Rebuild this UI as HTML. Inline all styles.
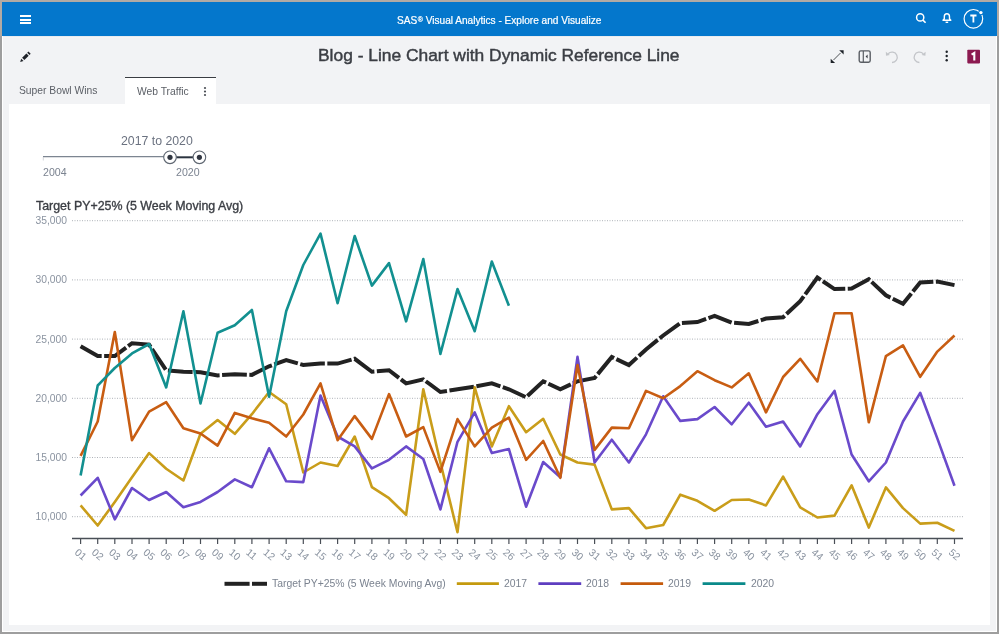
<!DOCTYPE html><html><head><meta charset="utf-8"><style>
*{margin:0;padding:0;box-sizing:border-box}
html,body{width:999px;height:634px;overflow:hidden;background:#9e9e9e;font-family:"Liberation Sans", sans-serif}
.a{position:absolute;white-space:nowrap;line-height:1;will-change:transform}
</style></head><body>
<div class="a" style="left:0;top:0;width:999px;height:2px;background:#b1aaa4"></div>
<div class="a" style="left:0;top:0;width:2px;height:36px;background:#b1aaa4"></div>
<div class="a" style="left:997px;top:0;width:2px;height:36px;background:#b1aaa4"></div>
<div class="a" style="left:2px;top:2px;width:995px;height:630px;background:#fff"></div>
<div class="a" style="left:3px;top:36px;width:993px;height:595px;background:#f2f3f5"></div>
<div class="a" style="left:2px;top:2px;width:995px;height:34px;background:#0477cc"></div>
<div class="a" style="left:3px;top:36px;width:993px;height:1px;background:#e8ebf0"></div>
<div class="a" style="left:3px;top:37px;width:993px;height:1px;background:#f5f5f5"></div>
<div class="a" style="left:9px;top:104px;width:981px;height:521px;background:#fff"></div>
<div class="a" style="left:125px;top:77px;width:91px;height:27px;background:#fff;border-top:1.5px solid #3a3d42"></div>
<!-- header -->
<div class="a" style="left:20px;top:15px;width:11px;height:2px;background:#fff"></div>
<div class="a" style="left:20px;top:18.5px;width:11px;height:2px;background:#fff"></div>
<div class="a" style="left:20px;top:22px;width:11px;height:2px;background:#fff"></div>
<div class="a" style="left:396.8px;top:16.35px;font-size:10.1px;color:#fff;-webkit-text-stroke:0.2px #fff">SAS<span style="font-size:7px;position:relative;top:-2.5px;margin-left:0.5px">®</span> Visual Analytics - Explore and Visualize</div>
<div class="a" style="left:318px;top:47.27px;font-size:17.4px;color:#3b3e44;-webkit-text-stroke:0.45px #3b3e44">Blog - Line Chart with Dynamic Reference Line</div>
<div class="a" style="left:19px;top:85.68px;font-size:10.3px;color:#5b5f66;">Super Bowl Wins</div>
<div class="a" style="left:136.5px;top:86.68px;font-size:10.3px;color:#5b5f66;">Web Traffic</div>
<div class="a" style="left:121px;top:134.59px;font-size:12.3px;color:#6b7280;">2017 to 2020</div>
<div class="a" style="left:43px;top:167.03px;font-size:10.6px;color:#7b8390;">2004</div>
<div class="a" style="left:176px;top:167.03px;font-size:10.6px;color:#7b8390;">2020</div>
<div class="a" style="left:36px;top:200.10px;font-size:12.4px;color:#3b3e44;-webkit-text-stroke:0.35px #3b3e44">Target PY+25% (5 Week Moving Avg)</div>
<div class="a" style="left:272px;top:578.70px;font-size:10.4px;color:#7b8390;">Target PY+25% (5 Week Moving Avg)</div>
<div class="a" style="left:504px;top:578.70px;font-size:10.4px;color:#7b8390;">2017</div>
<div class="a" style="left:586px;top:578.70px;font-size:10.4px;color:#7b8390;">2018</div>
<div class="a" style="left:668px;top:578.70px;font-size:10.4px;color:#7b8390;">2019</div>
<div class="a" style="left:751px;top:578.70px;font-size:10.4px;color:#7b8390;">2020</div>
<svg width="999" height="634" style="position:absolute;left:0;top:0;will-change:transform">
<style>.yl{font:10.3px "Liberation Sans", sans-serif;fill:#8a93a0} .xl{font:10.3px "Liberation Sans", sans-serif;fill:#8a93a0}</style>
<line x1="72" y1="220.7" x2="963" y2="220.7" stroke="#aeb2b8" stroke-width="1" stroke-dasharray="1,1.5"/><line x1="72" y1="279.9" x2="963" y2="279.9" stroke="#aeb2b8" stroke-width="1" stroke-dasharray="1,1.5"/><line x1="72" y1="339.1" x2="963" y2="339.1" stroke="#aeb2b8" stroke-width="1" stroke-dasharray="1,1.5"/><line x1="72" y1="398.3" x2="963" y2="398.3" stroke="#aeb2b8" stroke-width="1" stroke-dasharray="1,1.5"/><line x1="72" y1="457.5" x2="963" y2="457.5" stroke="#aeb2b8" stroke-width="1" stroke-dasharray="1,1.5"/><line x1="72" y1="516.7" x2="963" y2="516.7" stroke="#aeb2b8" stroke-width="1" stroke-dasharray="1,1.5"/><text x="67" y="224.2" text-anchor="end" class="yl">35,000</text><text x="67" y="283.4" text-anchor="end" class="yl">30,000</text><text x="67" y="342.6" text-anchor="end" class="yl">25,000</text><text x="67" y="401.8" text-anchor="end" class="yl">20,000</text><text x="67" y="461.0" text-anchor="end" class="yl">15,000</text><text x="67" y="520.2" text-anchor="end" class="yl">10,000</text>
<line x1="72" y1="538.5" x2="963" y2="538.5" stroke="#4a4f57" stroke-width="1.5"/>
<line x1="80.6" y1="538" x2="80.6" y2="544" stroke="#4a4f57" stroke-width="1.2"/><line x1="97.7" y1="538" x2="97.7" y2="544" stroke="#4a4f57" stroke-width="1.2"/><line x1="114.8" y1="538" x2="114.8" y2="544" stroke="#4a4f57" stroke-width="1.2"/><line x1="132.0" y1="538" x2="132.0" y2="544" stroke="#4a4f57" stroke-width="1.2"/><line x1="149.1" y1="538" x2="149.1" y2="544" stroke="#4a4f57" stroke-width="1.2"/><line x1="166.2" y1="538" x2="166.2" y2="544" stroke="#4a4f57" stroke-width="1.2"/><line x1="183.4" y1="538" x2="183.4" y2="544" stroke="#4a4f57" stroke-width="1.2"/><line x1="200.5" y1="538" x2="200.5" y2="544" stroke="#4a4f57" stroke-width="1.2"/><line x1="217.6" y1="538" x2="217.6" y2="544" stroke="#4a4f57" stroke-width="1.2"/><line x1="234.8" y1="538" x2="234.8" y2="544" stroke="#4a4f57" stroke-width="1.2"/><line x1="251.9" y1="538" x2="251.9" y2="544" stroke="#4a4f57" stroke-width="1.2"/><line x1="269.1" y1="538" x2="269.1" y2="544" stroke="#4a4f57" stroke-width="1.2"/><line x1="286.2" y1="538" x2="286.2" y2="544" stroke="#4a4f57" stroke-width="1.2"/><line x1="303.3" y1="538" x2="303.3" y2="544" stroke="#4a4f57" stroke-width="1.2"/><line x1="320.5" y1="538" x2="320.5" y2="544" stroke="#4a4f57" stroke-width="1.2"/><line x1="337.6" y1="538" x2="337.6" y2="544" stroke="#4a4f57" stroke-width="1.2"/><line x1="354.7" y1="538" x2="354.7" y2="544" stroke="#4a4f57" stroke-width="1.2"/><line x1="371.9" y1="538" x2="371.9" y2="544" stroke="#4a4f57" stroke-width="1.2"/><line x1="389.0" y1="538" x2="389.0" y2="544" stroke="#4a4f57" stroke-width="1.2"/><line x1="406.1" y1="538" x2="406.1" y2="544" stroke="#4a4f57" stroke-width="1.2"/><line x1="423.3" y1="538" x2="423.3" y2="544" stroke="#4a4f57" stroke-width="1.2"/><line x1="440.4" y1="538" x2="440.4" y2="544" stroke="#4a4f57" stroke-width="1.2"/><line x1="457.5" y1="538" x2="457.5" y2="544" stroke="#4a4f57" stroke-width="1.2"/><line x1="474.7" y1="538" x2="474.7" y2="544" stroke="#4a4f57" stroke-width="1.2"/><line x1="491.8" y1="538" x2="491.8" y2="544" stroke="#4a4f57" stroke-width="1.2"/><line x1="508.9" y1="538" x2="508.9" y2="544" stroke="#4a4f57" stroke-width="1.2"/><line x1="526.1" y1="538" x2="526.1" y2="544" stroke="#4a4f57" stroke-width="1.2"/><line x1="543.2" y1="538" x2="543.2" y2="544" stroke="#4a4f57" stroke-width="1.2"/><line x1="560.3" y1="538" x2="560.3" y2="544" stroke="#4a4f57" stroke-width="1.2"/><line x1="577.5" y1="538" x2="577.5" y2="544" stroke="#4a4f57" stroke-width="1.2"/><line x1="594.6" y1="538" x2="594.6" y2="544" stroke="#4a4f57" stroke-width="1.2"/><line x1="611.8" y1="538" x2="611.8" y2="544" stroke="#4a4f57" stroke-width="1.2"/><line x1="628.9" y1="538" x2="628.9" y2="544" stroke="#4a4f57" stroke-width="1.2"/><line x1="646.0" y1="538" x2="646.0" y2="544" stroke="#4a4f57" stroke-width="1.2"/><line x1="663.2" y1="538" x2="663.2" y2="544" stroke="#4a4f57" stroke-width="1.2"/><line x1="680.3" y1="538" x2="680.3" y2="544" stroke="#4a4f57" stroke-width="1.2"/><line x1="697.4" y1="538" x2="697.4" y2="544" stroke="#4a4f57" stroke-width="1.2"/><line x1="714.6" y1="538" x2="714.6" y2="544" stroke="#4a4f57" stroke-width="1.2"/><line x1="731.7" y1="538" x2="731.7" y2="544" stroke="#4a4f57" stroke-width="1.2"/><line x1="748.8" y1="538" x2="748.8" y2="544" stroke="#4a4f57" stroke-width="1.2"/><line x1="766.0" y1="538" x2="766.0" y2="544" stroke="#4a4f57" stroke-width="1.2"/><line x1="783.1" y1="538" x2="783.1" y2="544" stroke="#4a4f57" stroke-width="1.2"/><line x1="800.2" y1="538" x2="800.2" y2="544" stroke="#4a4f57" stroke-width="1.2"/><line x1="817.4" y1="538" x2="817.4" y2="544" stroke="#4a4f57" stroke-width="1.2"/><line x1="834.5" y1="538" x2="834.5" y2="544" stroke="#4a4f57" stroke-width="1.2"/><line x1="851.6" y1="538" x2="851.6" y2="544" stroke="#4a4f57" stroke-width="1.2"/><line x1="868.8" y1="538" x2="868.8" y2="544" stroke="#4a4f57" stroke-width="1.2"/><line x1="885.9" y1="538" x2="885.9" y2="544" stroke="#4a4f57" stroke-width="1.2"/><line x1="903.0" y1="538" x2="903.0" y2="544" stroke="#4a4f57" stroke-width="1.2"/><line x1="920.2" y1="538" x2="920.2" y2="544" stroke="#4a4f57" stroke-width="1.2"/><line x1="937.3" y1="538" x2="937.3" y2="544" stroke="#4a4f57" stroke-width="1.2"/><line x1="954.5" y1="538" x2="954.5" y2="544" stroke="#4a4f57" stroke-width="1.2"/><text transform="translate(74.0,553.6) rotate(40)" class="xl">01</text><text transform="translate(91.1,553.6) rotate(40)" class="xl">02</text><text transform="translate(108.2,553.6) rotate(40)" class="xl">03</text><text transform="translate(125.4,553.6) rotate(40)" class="xl">04</text><text transform="translate(142.5,553.6) rotate(40)" class="xl">05</text><text transform="translate(159.6,553.6) rotate(40)" class="xl">06</text><text transform="translate(176.8,553.6) rotate(40)" class="xl">07</text><text transform="translate(193.9,553.6) rotate(40)" class="xl">08</text><text transform="translate(211.0,553.6) rotate(40)" class="xl">09</text><text transform="translate(228.2,553.6) rotate(40)" class="xl">10</text><text transform="translate(245.3,553.6) rotate(40)" class="xl">11</text><text transform="translate(262.5,553.6) rotate(40)" class="xl">12</text><text transform="translate(279.6,553.6) rotate(40)" class="xl">13</text><text transform="translate(296.7,553.6) rotate(40)" class="xl">14</text><text transform="translate(313.9,553.6) rotate(40)" class="xl">15</text><text transform="translate(331.0,553.6) rotate(40)" class="xl">16</text><text transform="translate(348.1,553.6) rotate(40)" class="xl">17</text><text transform="translate(365.3,553.6) rotate(40)" class="xl">18</text><text transform="translate(382.4,553.6) rotate(40)" class="xl">19</text><text transform="translate(399.5,553.6) rotate(40)" class="xl">20</text><text transform="translate(416.7,553.6) rotate(40)" class="xl">21</text><text transform="translate(433.8,553.6) rotate(40)" class="xl">22</text><text transform="translate(450.9,553.6) rotate(40)" class="xl">23</text><text transform="translate(468.1,553.6) rotate(40)" class="xl">24</text><text transform="translate(485.2,553.6) rotate(40)" class="xl">25</text><text transform="translate(502.3,553.6) rotate(40)" class="xl">26</text><text transform="translate(519.5,553.6) rotate(40)" class="xl">27</text><text transform="translate(536.6,553.6) rotate(40)" class="xl">28</text><text transform="translate(553.7,553.6) rotate(40)" class="xl">29</text><text transform="translate(570.9,553.6) rotate(40)" class="xl">30</text><text transform="translate(588.0,553.6) rotate(40)" class="xl">31</text><text transform="translate(605.2,553.6) rotate(40)" class="xl">32</text><text transform="translate(622.3,553.6) rotate(40)" class="xl">33</text><text transform="translate(639.4,553.6) rotate(40)" class="xl">34</text><text transform="translate(656.6,553.6) rotate(40)" class="xl">35</text><text transform="translate(673.7,553.6) rotate(40)" class="xl">36</text><text transform="translate(690.8,553.6) rotate(40)" class="xl">37</text><text transform="translate(708.0,553.6) rotate(40)" class="xl">38</text><text transform="translate(725.1,553.6) rotate(40)" class="xl">39</text><text transform="translate(742.2,553.6) rotate(40)" class="xl">40</text><text transform="translate(759.4,553.6) rotate(40)" class="xl">41</text><text transform="translate(776.5,553.6) rotate(40)" class="xl">42</text><text transform="translate(793.6,553.6) rotate(40)" class="xl">43</text><text transform="translate(810.8,553.6) rotate(40)" class="xl">44</text><text transform="translate(827.9,553.6) rotate(40)" class="xl">45</text><text transform="translate(845.0,553.6) rotate(40)" class="xl">46</text><text transform="translate(862.2,553.6) rotate(40)" class="xl">47</text><text transform="translate(879.3,553.6) rotate(40)" class="xl">48</text><text transform="translate(896.4,553.6) rotate(40)" class="xl">49</text><text transform="translate(913.6,553.6) rotate(40)" class="xl">50</text><text transform="translate(930.7,553.6) rotate(40)" class="xl">51</text><text transform="translate(947.9,553.6) rotate(40)" class="xl">52</text>
<polyline points="80.6,346.2 97.7,356.1 114.8,356.1 132.0,343.2 149.1,344.6 166.2,370.3 183.4,371.7 200.5,372.2 217.6,375.4 234.8,374.3 251.9,374.9 269.1,366.3 286.2,360.1 303.3,365.0 320.5,363.6 337.6,363.6 354.7,358.8 371.9,371.8 389.0,370.2 406.1,383.4 423.3,379.4 440.4,392.0 457.5,389.3 474.7,386.6 491.8,383.4 508.9,389.3 526.1,397.3 543.2,381.3 560.3,389.3 577.5,381.3 594.6,378.0 611.8,356.9 628.9,365.0 646.0,349.4 663.2,335.5 680.3,323.1 697.4,322.1 714.6,315.9 731.7,322.6 748.8,324.0 766.0,318.6 783.1,317.2 800.2,301.2 817.4,277.6 834.5,289.1 851.6,288.6 868.8,279.2 885.9,295.3 903.0,303.8 920.2,282.4 937.3,281.6 954.5,285.1" fill="none" stroke="#222" stroke-width="4" stroke-dasharray="24.785,2.5" stroke-dashoffset="1.065" stroke-linejoin="miter"/>
<polyline points="80.6,505.4 97.7,525.5 114.8,501.9 132.0,477.2 149.1,453.1 166.2,468.7 183.4,480.5 200.5,433.8 217.6,420.1 234.8,433.8 251.9,414.2 269.1,392.0 286.2,404.3 303.3,472.5 320.5,462.5 337.6,466.0 354.7,436.5 371.9,487.2 389.0,498.2 406.1,514.8 423.3,389.3 440.4,462.5 457.5,532.2 474.7,387.4 491.8,446.4 508.9,406.2 526.1,432.2 543.2,418.8 560.3,454.5 577.5,462.5 594.6,464.6 611.8,509.4 628.9,508.1 646.0,528.2 663.2,525.0 680.3,494.7 697.4,500.8 714.6,510.8 731.7,500.0 748.8,499.5 766.0,505.4 783.1,476.7 800.2,507.3 817.4,517.5 834.5,515.6 851.6,485.3 868.8,527.6 885.9,487.4 903.0,508.1 920.2,523.6 937.3,522.8 954.5,530.9" fill="none" stroke="#c99d1a" stroke-width="2.6" stroke-linejoin="round"/>
<polyline points="80.6,495.5 97.7,477.8 114.8,519.3 132.0,488.0 149.1,500.0 166.2,492.0 183.4,507.3 200.5,501.9 217.6,492.0 234.8,479.4 251.9,487.2 269.1,448.3 286.2,481.3 303.3,482.1 320.5,395.5 337.6,436.5 354.7,446.4 371.9,468.4 389.0,459.8 406.1,446.4 423.3,459.0 440.4,509.4 457.5,441.8 474.7,412.4 491.8,453.1 508.9,449.1 526.1,506.7 543.2,462.0 560.3,477.2 577.5,356.9 594.6,462.5 611.8,439.7 628.9,462.5 646.0,434.3 663.2,396.3 680.3,420.9 697.4,419.1 714.6,407.0 731.7,424.3 748.8,402.7 766.0,426.8 783.1,421.5 800.2,446.4 817.4,414.2 834.5,390.9 851.6,454.5 868.8,481.3 885.9,462.5 903.0,421.5 920.2,392.8 937.3,438.4 954.5,485.8" fill="none" stroke="#6a4acb" stroke-width="2.6" stroke-linejoin="round"/>
<polyline points="80.6,455.8 97.7,421.5 114.8,332.0 132.0,440.2 149.1,411.6 166.2,402.2 183.4,428.2 200.5,433.5 217.6,445.6 234.8,412.9 251.9,418.3 269.1,422.8 286.2,436.5 303.3,414.5 320.5,383.4 337.6,440.2 354.7,416.1 371.9,438.9 389.0,394.1 406.1,436.5 423.3,427.1 440.4,471.9 457.5,419.1 474.7,446.4 491.8,427.6 508.9,417.7 526.1,459.8 543.2,441.0 560.3,477.8 577.5,365.0 594.6,449.9 611.8,427.6 628.9,428.2 646.0,390.9 663.2,398.2 680.3,386.1 697.4,371.2 714.6,380.2 731.7,387.4 748.8,373.3 766.0,412.4 783.1,377.0 800.2,358.8 817.4,381.5 834.5,313.2 851.6,313.2 868.8,422.3 885.9,356.1 903.0,345.4 920.2,376.8 937.3,351.6 954.5,335.5" fill="none" stroke="#c85d12" stroke-width="2.6" stroke-linejoin="round"/>
<polyline points="80.6,475.5 97.7,385.5 114.8,368.0 132.0,353.4 149.1,344.0 166.2,387.4 183.4,311.3 200.5,403.5 217.6,332.8 234.8,325.3 251.9,310.0 269.1,396.8 286.2,311.3 303.3,265.0 320.5,233.6 337.6,303.3 354.7,236.0 371.9,285.6 389.0,263.1 406.1,321.3 423.3,259.1 440.4,354.0 457.5,289.1 474.7,331.2 491.8,261.5 508.9,305.7" fill="none" stroke="#129090" stroke-width="2.6" stroke-linejoin="round"/>
</svg>

<svg width="999" height="634" style="position:absolute;left:0;top:0;will-change:transform">
<!-- header icons -->
<circle cx="920.2" cy="17.4" r="3.6" fill="none" stroke="#fff" stroke-width="1.5"/>
<line x1="922.9" y1="20.1" x2="925.6" y2="22.8" stroke="#fff" stroke-width="1.6"/>
<path d="M943 20.3 L944.3 18.8 L944.3 16.8 Q944.3 13.8 946.9 13.8 Q949.5 13.8 949.5 16.8 L949.5 18.8 L950.8 20.3 Z" fill="none" stroke="#fff" stroke-width="1.4" stroke-linejoin="round"/>
<rect x="945.6" y="21.6" width="2.6" height="1.4" fill="#fff"/>
<circle cx="973.4" cy="18.8" r="9.3" fill="none" stroke="#fff" stroke-width="1.2"/>
<circle cx="980.9" cy="12.6" r="2.6" fill="#0477cc"/>
<circle cx="980.9" cy="12.6" r="1.7" fill="#fff"/>
<path d="M970.3 15.5 H976.5 M973.4 15.5 V22.6" stroke="#fff" stroke-width="1.8"/>
<!-- pencil --><g transform="translate(-0.4,0.8)">
<path d="M20.6 61.2 L21.6 57.9 L23.9 60.2 Z" fill="#1e2228"/>
<path d="M22.5 57 L26.8 52.7 L29.1 55 L24.8 59.3 Z" fill="#1e2228"/>
<path d="M27.6 51.9 L28.8 50.7 L31.1 53 L29.9 54.2 Z" fill="#1e2228"/>
</g><!-- expand -->
<line x1="833.5" y1="60" x2="840.5" y2="53" stroke="#3a3e44" stroke-width="0.9"/>
<path d="M843.6 50.2 L843.6 54.6 L839.2 50.2 Z" fill="#1e2228"/>
<path d="M830.7 63.1 L830.7 58.7 L835.1 63.1 Z" fill="#1e2228"/>
<!-- panel -->
<rect x="859.2" y="50.9" width="11" height="11.3" rx="1.6" fill="none" stroke="#5a5e64" stroke-width="1.4"/>
<line x1="863.3" y1="51" x2="863.3" y2="62" stroke="#5a5e64" stroke-width="1.2"/>
<path d="M865.6 56.5 L867.6 54.4 L867.6 58.6 Z" fill="#3a3e44"/>
<!-- undo/redo -->
<path d="M888.2 53.8 A5.2 5.2 0 1 1 892 62.5" fill="none" stroke="#c3c5c9" stroke-width="1.3"/>
<path d="M885.8 51.8 L886 55.8 L889.8 55 Z" fill="#c3c5c9"/>
<path d="M923.2 53.8 A5.2 5.2 0 1 0 919.4 62.5" fill="none" stroke="#c3c5c9" stroke-width="1.3"/>
<path d="M925.6 51.8 L925.4 55.8 L921.6 55 Z" fill="#c3c5c9"/>
<!-- kebab -->
<circle cx="946.7" cy="51.7" r="1.2" fill="#1e2228"/>
<circle cx="946.7" cy="56" r="1.2" fill="#1e2228"/>
<circle cx="946.7" cy="60.3" r="1.2" fill="#1e2228"/>
<rect x="967.3" y="49.8" width="12.7" height="13.6" rx="0.8" fill="#8c1a50"/>
<path d="M971.6 54.6 L974.3 52.9 L974.3 60.4" fill="none" stroke="#fff" stroke-width="2.1"/>
<!-- tab kebab -->
<circle cx="205" cy="88" r="1.1" fill="#4a4e55"/>
<circle cx="205" cy="91.5" r="1.1" fill="#4a4e55"/>
<circle cx="205" cy="95" r="1.1" fill="#4a4e55"/>
<!-- slider -->
<line x1="43" y1="156.6" x2="170" y2="156.6" stroke="#7c8591" stroke-width="1.4"/>
<line x1="43.3" y1="157" x2="43.3" y2="160.5" stroke="#c8ccd2" stroke-width="0.8"/>
<line x1="170" y1="157.3" x2="199.4" y2="157.3" stroke="#2b3440" stroke-width="2"/>
<circle cx="170" cy="157.3" r="6.3" fill="#fff" stroke="#5f6772" stroke-width="1.1"/>
<circle cx="170" cy="157.3" r="2.6" fill="#2f3540"/>
<circle cx="199.4" cy="157.3" r="6.3" fill="#fff" stroke="#5f6772" stroke-width="1.1"/>
<circle cx="199.4" cy="157.3" r="2.6" fill="#2f3540"/>
<!-- legend -->
<line x1="224.5" y1="583.8" x2="249.6" y2="583.8" stroke="#222" stroke-width="4"/>
<line x1="252" y1="583.8" x2="267" y2="583.8" stroke="#222" stroke-width="4"/>
<line x1="456.8" y1="583.6" x2="498.9" y2="583.6" stroke="#c49a0e" stroke-width="2.6"/>
<line x1="538.4" y1="583.6" x2="581.2" y2="583.6" stroke="#5e3ec0" stroke-width="2.6"/>
<line x1="620.6" y1="583.6" x2="663.1" y2="583.6" stroke="#c55a0b" stroke-width="2.6"/>
<line x1="702.6" y1="583.6" x2="745.4" y2="583.6" stroke="#0a8a8a" stroke-width="2.6"/>
</svg>
</body></html>
